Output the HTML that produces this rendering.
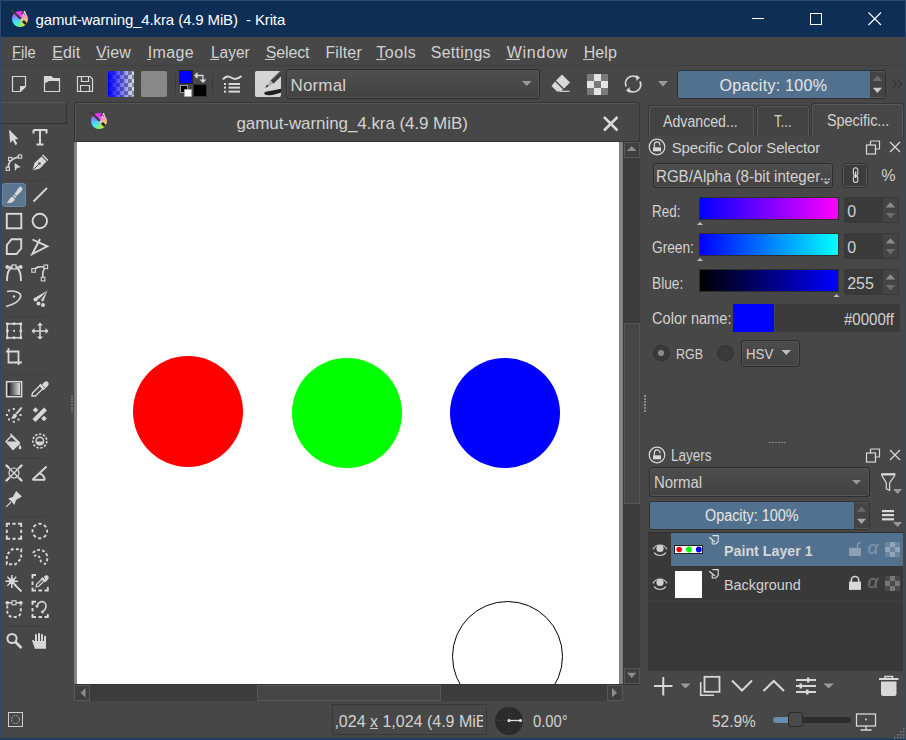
<!DOCTYPE html>
<html><head><meta charset="utf-8">
<style>
*{box-sizing:border-box;margin:0;padding:0}
html,body{width:906px;height:740px;overflow:hidden;background:#474747}
body{position:relative;font-family:"Liberation Sans",sans-serif;color:#d2d2d2}
.a{position:absolute}
.t{position:absolute;white-space:pre;line-height:1}
svg{position:absolute;overflow:visible}
</style></head><body>
<div class="a" style="left:0px;top:0px;width:906px;height:740px;border:1px solid #2c4a6f;"></div>
<div class="a" style="left:1px;top:1px;width:904px;height:36px;background:#0e2e56;"></div>
<div class="a" style="left:12px;top:11px;width:16px;height:16px;border-radius:50%;background:radial-gradient(circle at 45% 60%,rgba(120,170,255,0.55),rgba(120,170,255,0) 55%),conic-gradient(from 0deg,#ff20ff 0deg,#ff70e0 40deg,#ffb0a0 80deg,#ffe030 130deg,#a0ff40 170deg,#30fff0 220deg,#40e0ff 250deg,#8080ff 290deg,#e040ff 330deg,#ff20ff 360deg)"></div>
<svg style="left:12px;top:11px;" width="16" height="16" viewBox="0 0 16 16"><line x1="-1" y1="-1.5" x2="9" y2="8" stroke="#3a3a3a" stroke-width="2.2"/><line x1="9" y1="8" x2="11" y2="10" stroke="#c8c8c8" stroke-width="2"/><line x1="11" y1="10" x2="14" y2="13" stroke="#222" stroke-width="2.6"/><path d="M9 3 L12 -1 L16 4 Z" fill="#333"/><path d="M11.5 5 L12.5 0 L14 4" fill="none" stroke="#eee" stroke-width="1"/></svg>
<div class="t" style="left:35.50px;top:12.00px;font-size:15px;letter-spacing:-0.122px;color:#ffffff;">gamut-warning_4.kra (4.9 MiB)  - Krita</div>
<div class="a" style="left:752px;top:18px;width:12px;height:1px;background:#ffffff;"></div>
<div class="a" style="left:809.5px;top:13px;width:12.5px;height:12px;border:1px solid #ffffff;"></div>
<svg style="left:868px;top:12px;" width="14" height="14" viewBox="0 0 14 14"><path d="M0.5 0.5 L13 13 M13 0.5 L0.5 13" stroke="#fff" stroke-width="1.1"/></svg>
<div class="t" style="left:12.40px;top:45.00px;font-size:16px;letter-spacing:0.000px;color:#d2d2d2;transform:scaleX(0.9231);transform-origin:0 0;">File</div>
<div class="t" style="left:52.30px;top:45.00px;font-size:16px;letter-spacing:0.100px;color:#d2d2d2;">Edit</div>
<div class="t" style="left:96.00px;top:45.00px;font-size:16px;letter-spacing:0.133px;color:#d2d2d2;">View</div>
<div class="t" style="left:147.70px;top:45.00px;font-size:16px;letter-spacing:0.400px;color:#d2d2d2;">Image</div>
<div class="t" style="left:210.60px;top:45.00px;font-size:16px;letter-spacing:0.000px;color:#d2d2d2;transform:scaleX(0.9659);transform-origin:0 0;">Layer</div>
<div class="t" style="left:265.70px;top:45.00px;font-size:16px;letter-spacing:-0.140px;color:#d2d2d2;">Select</div>
<div class="t" style="left:325.40px;top:45.00px;font-size:16px;letter-spacing:0.160px;color:#d2d2d2;">Filter</div>
<div class="t" style="left:376.30px;top:45.00px;font-size:16px;letter-spacing:0.550px;color:#d2d2d2;">Tools</div>
<div class="t" style="left:430.70px;top:45.00px;font-size:16px;letter-spacing:0.300px;color:#d2d2d2;">Settings</div>
<div class="t" style="left:506.70px;top:45.00px;font-size:16px;letter-spacing:0.760px;color:#d2d2d2;">Window</div>
<div class="t" style="left:583.70px;top:45.00px;font-size:16px;letter-spacing:0.100px;color:#d2d2d2;">Help</div>
<div class="a" style="left:12px;top:59px;width:11px;height:1px;background:#c8c8c8;"></div>
<div class="a" style="left:52px;top:59px;width:11px;height:1px;background:#c8c8c8;"></div>
<div class="a" style="left:96px;top:59px;width:11px;height:1px;background:#c8c8c8;"></div>
<div class="a" style="left:147px;top:59px;width:4px;height:1px;background:#c8c8c8;"></div>
<div class="a" style="left:210px;top:59px;width:9px;height:1px;background:#c8c8c8;"></div>
<div class="a" style="left:265px;top:59px;width:10px;height:1px;background:#c8c8c8;"></div>
<div class="a" style="left:354px;top:59px;width:5px;height:1px;background:#c8c8c8;"></div>
<div class="a" style="left:376px;top:59px;width:10px;height:1px;background:#c8c8c8;"></div>
<div class="a" style="left:464px;top:59px;width:7px;height:1px;background:#c8c8c8;"></div>
<div class="a" style="left:506px;top:59px;width:14px;height:1px;background:#c8c8c8;"></div>
<div class="a" style="left:583px;top:59px;width:11px;height:1px;background:#c8c8c8;"></div>
<div class="a" style="left:1px;top:65px;width:904px;height:1px;background:#3f3f3f;"></div>
<div class="a" style="left:108px;top:71px;width:26px;height:26px;border-radius:2px;overflow:hidden;background:linear-gradient(90deg,#0000ff 0%,rgba(0,0,255,0.8) 20%,rgba(0,0,255,0) 100%),repeating-conic-gradient(#8a8a8a 0 25%,#e4e4e4 0 50%) 0 0/8px 8px"></div>
<div class="a" style="left:141px;top:71px;width:26px;height:26px;border-radius:2px;background:#888"></div>
<div class="a" style="left:175px;top:74px;width:1px;height:20px;background:#3a3a3a;"></div>
<div class="a" style="left:179px;top:70px;width:14px;height:14px;background:#0000ff;border:1px solid #222;"></div>
<div class="a" style="left:193px;top:84px;width:14px;height:13px;background:#000000;border:1px solid #333;"></div>
<div class="a" style="left:180px;top:85px;width:8px;height:8px;background:#000;border:1px solid #999;"></div>
<div class="a" style="left:212px;top:74px;width:1px;height:20px;background:#3a3a3a;"></div>
<div class="a" style="left:255px;top:70.7px;width:26.2px;height:26.3px;border-radius:2px;background:#d4d4d4;overflow:hidden"><svg style="left:0;top:0" width="26.2" height="26.3" viewBox="255 70.7 26.2 26.3"><path d="M270.5 80.2 L281.5 69.5 L284.5 72.5 L273.5 83.5 Z" fill="#3c3c3c"/><path d="M272.8 79 L282 70" stroke="#6a6a6a" stroke-width="0.8"/><path d="M270.5 80.2 L273.5 83.5 L265.5 87.5 Z" fill="#b0b0b0"/><path d="M265.3 87.6 L267 84.3 L268.6 86 Z" fill="#333"/><path d="M264.2 92.6 C264 95,268 95.5,272 94.6 C276 93.8,279 92.8,282 91.8 L282 88.2 C277 89.2,272 90.3,267 91.2 C265.5 91.5,264.4 91.8,264.2 92.6 Z" fill="#1e1e1e"/></svg></div>
<div class="a" style="left:286px;top:69px;width:254px;height:30px;border:1px solid #2e2e2e;border-radius:3px;box-shadow:inset 0 0 0 1px #525252;background:linear-gradient(#4f4f4f,#424242)"></div>
<div class="t" style="left:290.60px;top:77.00px;font-size:17px;letter-spacing:0.120px;color:#d2d2d2;">Normal</div>
<div class="a" style="left:677px;top:69.5px;width:209px;height:29px;border:1px solid #2f2f2f;border-radius:3px;background:#444;overflow:hidden"><div style="position:absolute;left:0;top:0;width:191.5px;height:27px;background:#52718f"></div><div style="position:absolute;left:192.5px;top:0;width:15px;height:27px;border:1px solid #575757;border-left:none;border-radius:0 3px 3px 0"></div></div>
<div class="t" style="left:719.50px;top:78.00px;font-size:16px;letter-spacing:0.275px;color:#e6e6e6;">Opacity: 100%</div>
<div class="a" style="left:1px;top:102px;width:66px;height:22px;border-top:1px solid #575757;border-right:1px solid #353535;border-bottom:1px solid #313131"></div>
<div class="a" style="left:7px;top:180px;width:40px;height:1px;background:#3f3f3f;"></div>
<div class="a" style="left:7px;top:316px;width:40px;height:1px;background:#3f3f3f;"></div>
<div class="a" style="left:7px;top:374px;width:40px;height:1px;background:#3f3f3f;"></div>
<div class="a" style="left:7px;top:458px;width:40px;height:1px;background:#3f3f3f;"></div>
<div class="a" style="left:7px;top:516px;width:40px;height:1px;background:#3f3f3f;"></div>
<div class="a" style="left:7px;top:626px;width:40px;height:1px;background:#3f3f3f;"></div>
<div class="a" style="left:2px;top:183px;width:24px;height:24px;border-radius:3px;background:#5a7690;border:1px solid #6a86a0"></div>
<div class="a" style="left:8px;top:383px;width:12.2px;height:12.4px;background:linear-gradient(90deg,#1e1e1e,#e0e0e0)"></div>
<div class="a" style="left:71px;top:395px;width:2px;height:2px;background:#6a6a6a;"></div>
<div class="a" style="left:71px;top:398px;width:2px;height:2px;background:#6a6a6a;"></div>
<div class="a" style="left:71px;top:401px;width:2px;height:2px;background:#6a6a6a;"></div>
<div class="a" style="left:71px;top:404px;width:2px;height:2px;background:#6a6a6a;"></div>
<div class="a" style="left:71px;top:407px;width:2px;height:2px;background:#6a6a6a;"></div>
<div class="a" style="left:71px;top:410px;width:2px;height:2px;background:#6a6a6a;"></div>
<div class="a" style="left:74px;top:102px;width:566px;height:39px;border:1px solid #383838;border-bottom:none;border-radius:4px 4px 0 0;background:#474747;box-shadow:inset 1px 1px 0 #545454"></div>
<div class="a" style="left:74px;top:141px;width:566px;height:1px;background:#353535;"></div>
<div class="a" style="left:91px;top:113px;width:16px;height:16px;border-radius:50%;background:radial-gradient(circle at 45% 60%,rgba(120,170,255,0.55),rgba(120,170,255,0) 55%),conic-gradient(from 0deg,#ff20ff 0deg,#ff70e0 40deg,#ffb0a0 80deg,#ffe030 130deg,#a0ff40 170deg,#30fff0 220deg,#40e0ff 250deg,#8080ff 290deg,#e040ff 330deg,#ff20ff 360deg)"></div>
<svg style="left:91px;top:113px;" width="16" height="16" viewBox="0 0 16 16"><line x1="-1" y1="-1.5" x2="9" y2="8" stroke="#3a3a3a" stroke-width="2.2"/><line x1="9" y1="8" x2="11" y2="10" stroke="#c8c8c8" stroke-width="2"/><line x1="11" y1="10" x2="14" y2="13" stroke="#222" stroke-width="2.6"/><path d="M9 3 L12 -1 L16 4 Z" fill="#333"/><path d="M11.5 5 L12.5 0 L14 4" fill="none" stroke="#eee" stroke-width="1"/></svg>
<div class="t" style="left:236.40px;top:115.00px;font-size:17px;letter-spacing:-0.068px;color:#d2d2d2;">gamut-warning_4.kra (4.9 MiB)</div>
<div class="a" style="left:74px;top:142px;width:4px;height:542px;background:#7c7c7c;"></div>
<div class="a" style="left:75px;top:142px;width:2px;height:542px;background:#878787;"></div>
<div class="a" style="left:77px;top:142px;width:542px;height:542px;background:#ffffff;"></div>
<div class="a" style="left:619px;top:142px;width:4px;height:542px;background:#7c7c7c;"></div>
<div class="a" style="left:620px;top:142px;width:2px;height:542px;background:#878787;"></div>
<div class="a" style="left:74px;top:684px;width:566px;height:1px;background:#333333;"></div>
<div class="a" style="left:133.2px;top:356px;width:110px;height:110.8px;border-radius:50%;background:#ff0000"></div>
<div class="a" style="left:291.5px;top:358.2px;width:110px;height:110.3px;border-radius:50%;background:#00ff00"></div>
<div class="a" style="left:450px;top:357.7px;width:110.2px;height:110px;border-radius:50%;background:#0000ff"></div>
<div class="a" style="left:77px;top:142px;width:542px;height:542px;overflow:hidden"><div style="position:absolute;left:374.5px;top:458.8px;width:111.4px;height:111.4px;border-radius:50%;border:1.2px solid #000"></div></div>
<div class="a" style="left:623px;top:142px;width:17px;height:542px;background:#3c3c3c;"></div>
<div class="a" style="left:624px;top:142px;width:16px;height:16px;border:1px solid #575757;background:#3f3f3f;"></div>
<div class="a" style="left:624px;top:323px;width:16px;height:181px;border:1px solid #575757;background:#464646;"></div>
<div class="a" style="left:624px;top:668px;width:16px;height:16px;border:1px solid #575757;background:#3f3f3f;"></div>
<div class="a" style="left:74px;top:685px;width:549px;height:16px;background:#3c3c3c;"></div>
<div class="a" style="left:74px;top:685px;width:16px;height:16px;border:1px solid #575757;background:#3f3f3f;"></div>
<div class="a" style="left:257px;top:685px;width:184px;height:16px;border:1px solid #575757;background:#464646;"></div>
<div class="a" style="left:607px;top:685px;width:16px;height:16px;border:1px solid #575757;background:#3f3f3f;"></div>
<div class="a" style="left:647px;top:135px;width:257px;height:1px;background:#3a3a3a;"></div>
<div class="a" style="left:648px;top:104.5px;width:107px;height:31px;border:1px solid #383838;border-bottom:none;border-radius:3px 3px 0 0;box-shadow:inset 1px 1px 0 #575757,inset -1px 0 0 #575757;background:#434343"></div>
<div class="a" style="left:756px;top:104.5px;width:54px;height:31px;border:1px solid #383838;border-bottom:none;border-radius:3px 3px 0 0;box-shadow:inset 1px 1px 0 #575757,inset -1px 0 0 #575757;background:#434343"></div>
<div class="a" style="left:811px;top:103px;width:93px;height:34px;border:1px solid #383838;border-bottom:none;border-radius:3px 3px 0 0;box-shadow:inset 1px 1px 0 #575757,inset -1px 0 0 #575757;background:#474747"></div>
<div class="t" style="left:662.90px;top:114.00px;font-size:16px;letter-spacing:0.000px;color:#d2d2d2;transform:scaleX(0.8847);transform-origin:0 0;">Advanced...</div>
<div class="t" style="left:774.00px;top:114.00px;font-size:16px;letter-spacing:0.000px;color:#d2d2d2;transform:scaleX(0.8238);transform-origin:0 0;">T...</div>
<div class="t" style="left:826.60px;top:113.00px;font-size:16px;letter-spacing:0.000px;color:#d2d2d2;transform:scaleX(0.8986);transform-origin:0 0;">Specific...</div>
<div class="t" style="left:671.70px;top:140.00px;font-size:15px;letter-spacing:-0.141px;color:#d2d2d2;">Specific Color Selector</div>
<div class="a" style="left:653px;top:163px;width:180px;height:25px;border:1px solid #2e2e2e;border-radius:3px;box-shadow:inset 0 0 0 1px #525252;background:linear-gradient(#4e4e4e,#434343)"></div>
<div class="t" style="left:656.00px;top:169.00px;font-size:16px;letter-spacing:0.000px;color:#d2d2d2;transform:scaleX(0.9417);transform-origin:0 0;">RGB/Alpha (8-bit integer</div>
<div class="a" style="left:842px;top:162.5px;width:26px;height:25.5px;border:1px solid #333;border-radius:4px;box-shadow:inset 0 0 0 1px #575757;background:#3c3c3c"></div>
<div class="t" style="left:881.30px;top:168.00px;font-size:16px;letter-spacing:0.000px;color:#d2d2d2;">%</div>
<div class="t" style="left:652.30px;top:204.00px;font-size:16px;letter-spacing:0.000px;color:#d2d2d2;transform:scaleX(0.8441);transform-origin:0 0;">Red:</div>
<div class="a" style="left:699px;top:196.5px;width:140px;height:23px;border:1px solid #2e2e2e;background:linear-gradient(90deg,#0000ff,#ff00ff)"></div>
<div class="a" style="left:844px;top:197.0px;width:55px;height:26px;border:1px solid #393939;border-radius:3px;background:#3a3a3a"></div>
<div class="a" style="left:883px;top:198.0px;width:15px;height:24px;background:#444444;"></div>
<div class="t" style="left:847.20px;top:204.00px;font-size:16px;letter-spacing:0.000px;color:#d2d2d2;">0</div>
<div class="t" style="left:652.30px;top:240.00px;font-size:16px;letter-spacing:0.000px;color:#d2d2d2;transform:scaleX(0.8571);transform-origin:0 0;">Green:</div>
<div class="a" style="left:699px;top:232.5px;width:140px;height:23px;border:1px solid #2e2e2e;background:linear-gradient(90deg,#0000ff,#00ffff)"></div>
<div class="a" style="left:844px;top:233.0px;width:55px;height:26px;border:1px solid #393939;border-radius:3px;background:#3a3a3a"></div>
<div class="a" style="left:883px;top:234.0px;width:15px;height:24px;background:#444444;"></div>
<div class="t" style="left:847.20px;top:240.00px;font-size:16px;letter-spacing:0.000px;color:#d2d2d2;">0</div>
<div class="t" style="left:652.30px;top:276.00px;font-size:16px;letter-spacing:0.000px;color:#d2d2d2;transform:scaleX(0.8568);transform-origin:0 0;">Blue:</div>
<div class="a" style="left:699px;top:268.5px;width:140px;height:23px;border:1px solid #2e2e2e;background:linear-gradient(90deg,#000000,#0000ff)"></div>
<div class="a" style="left:844px;top:269.0px;width:55px;height:26px;border:1px solid #393939;border-radius:3px;background:#3a3a3a"></div>
<div class="a" style="left:883px;top:270.0px;width:15px;height:24px;background:#444444;"></div>
<div class="t" style="left:847.20px;top:276.00px;font-size:16px;letter-spacing:0.000px;color:#d2d2d2;">255</div>
<div class="t" style="left:652.30px;top:311.00px;font-size:16px;letter-spacing:0.000px;color:#d2d2d2;transform:scaleX(0.9115);transform-origin:0 0;">Color name:</div>
<div class="a" style="left:733px;top:304px;width:41px;height:28px;background:#0000ff;"></div>
<div class="a" style="left:775px;top:304px;width:125px;height:28px;border-radius:3px;background:#3a3a3a"></div>
<div class="t" style="left:844.00px;top:312.00px;font-size:16px;letter-spacing:0.000px;color:#d2d2d2;transform:scaleX(0.9407);transform-origin:0 0;">#0000ff</div>
<div class="a" style="left:653px;top:344.6px;width:16.5px;height:16.5px;border-radius:50%;background:#3a3a3a;border:1px solid #333"></div>
<div class="a" style="left:658.2px;top:349.8px;width:6px;height:6px;border-radius:50%;background:#8c8c8c"></div>
<div class="t" style="left:676.30px;top:346.00px;font-size:15px;letter-spacing:0.000px;color:#d2d2d2;transform:scaleX(0.8303);transform-origin:0 0;">RGB</div>
<div class="a" style="left:717px;top:344.6px;width:16.5px;height:16.5px;border-radius:50%;background:#3a3a3a;border:1px solid #333"></div>
<div class="a" style="left:740.5px;top:339.5px;width:59.5px;height:27px;border:1px solid #2e2e2e;border-radius:3px;box-shadow:inset 0 0 0 1px #525252;background:linear-gradient(#4c4c4c,#434343)"></div>
<div class="t" style="left:745.60px;top:346.00px;font-size:15px;letter-spacing:0.000px;color:#d2d2d2;transform:scaleX(0.8839);transform-origin:0 0;">HSV</div>
<div class="a" style="left:644px;top:395px;width:1.5px;height:1.5px;background:#8a8a8a;"></div>
<div class="a" style="left:644px;top:398px;width:1.5px;height:1.5px;background:#8a8a8a;"></div>
<div class="a" style="left:644px;top:401px;width:1.5px;height:1.5px;background:#8a8a8a;"></div>
<div class="a" style="left:644px;top:404px;width:1.5px;height:1.5px;background:#8a8a8a;"></div>
<div class="a" style="left:644px;top:407px;width:1.5px;height:1.5px;background:#8a8a8a;"></div>
<div class="a" style="left:644px;top:410px;width:1.5px;height:1.5px;background:#8a8a8a;"></div>
<div class="a" style="left:769px;top:441.5px;width:1.5px;height:1.5px;background:#8a8a8a;"></div>
<div class="a" style="left:772px;top:441.5px;width:1.5px;height:1.5px;background:#8a8a8a;"></div>
<div class="a" style="left:775px;top:441.5px;width:1.5px;height:1.5px;background:#8a8a8a;"></div>
<div class="a" style="left:778px;top:441.5px;width:1.5px;height:1.5px;background:#8a8a8a;"></div>
<div class="a" style="left:781px;top:441.5px;width:1.5px;height:1.5px;background:#8a8a8a;"></div>
<div class="a" style="left:784px;top:441.5px;width:1.5px;height:1.5px;background:#8a8a8a;"></div>
<div class="t" style="left:671.40px;top:448.00px;font-size:16px;letter-spacing:0.000px;color:#d2d2d2;transform:scaleX(0.8438);transform-origin:0 0;">Layers</div>
<div class="a" style="left:648.5px;top:467px;width:221.5px;height:30px;border:1px solid #2e2e2e;border-radius:3px;box-shadow:inset 0 0 0 1px #525252;background:linear-gradient(#4d4d4d,#424242)"></div>
<div class="t" style="left:653.80px;top:475.00px;font-size:16px;letter-spacing:0.000px;color:#d2d2d2;transform:scaleX(0.9346);transform-origin:0 0;">Normal</div>
<div class="a" style="left:648.5px;top:500.5px;width:221.5px;height:29px;border:1px solid #333;border-radius:3px;background:#444;overflow:hidden"><div style="position:absolute;left:0;top:0;width:204px;height:27px;background:#52718f"></div><div style="position:absolute;left:205px;top:0;width:15.5px;height:27px;border:1px solid #575757;border-left:none;border-radius:0 3px 3px 0"></div></div>
<div class="t" style="left:704.60px;top:508.00px;font-size:16px;letter-spacing:0.000px;color:#e6e6e6;transform:scaleX(0.8981);transform-origin:0 0;">Opacity: 100%</div>
<div class="a" style="left:648px;top:531.5px;width:255px;height:1px;background:#2f2f2f;"></div>
<div class="a" style="left:648px;top:532.5px;width:255px;height:138.5px;background:#393939;"></div>
<div class="a" style="left:670.8px;top:533px;width:232.2px;height:33px;background:#52718f;"></div>
<div class="a" style="left:648px;top:600px;width:255px;height:1px;background:#3e3e3e;"></div>
<div class="a" style="left:674px;top:545px;width:29px;height:9px;background:#ffffff;border:1px solid #222;"></div>
<div class="a" style="left:675px;top:571px;width:27px;height:27px;background:#ffffff;"></div>
<div class="t" style="left:724.30px;top:543.00px;font-size:15px;letter-spacing:0.000px;color:#d6d6d6;font-weight:bold;transform:scaleX(0.9495);transform-origin:0 0;">Paint Layer 1</div>
<div class="t" style="left:724.30px;top:577.00px;font-size:15px;letter-spacing:0.000px;color:#d2d2d2;transform:scaleX(0.9588);transform-origin:0 0;">Background</div>
<div class="t" style="left:867.50px;top:538.00px;font-size:19px;letter-spacing:0.000px;color:#7b94aa;font-style:italic;-webkit-text-stroke:0.4px #7b94aa;">α</div>
<div class="t" style="left:867.50px;top:572.00px;font-size:19px;letter-spacing:0.000px;color:#6a6a6a;font-style:italic;-webkit-text-stroke:0.4px #6a6a6a;">α</div>
<div class="a" style="left:8px;top:712px;width:15px;height:15px;border:1px solid #d0d0d0;"></div>
<div class="a" style="left:332px;top:704px;width:155px;height:31px;border:1px solid #393939;overflow:hidden"></div>
<div class="t" style="left:334.40px;top:714.00px;font-size:16px;letter-spacing:0.000px;color:#d2d2d2;clip-path:inset(0 -2px 0 0);">,024 x 1,024 (4.9 MiB)</div>
<div class="a" style="left:483px;top:705px;width:22px;height:29px;background:#474747;"></div>
<div class="a" style="left:486px;top:704px;width:1px;height:31px;background:#393939;"></div>
<div class="a" style="left:370px;top:727.5px;width:8px;height:1px;background:#c8c8c8;"></div>
<div class="a" style="left:495px;top:706.5px;width:28px;height:28px;border-radius:50%;background:#2b2b2b"></div>
<div class="t" style="left:532.60px;top:714.00px;font-size:16px;letter-spacing:0.000px;color:#d2d2d2;transform:scaleX(0.9237);transform-origin:0 0;">0.00°</div>
<div class="t" style="left:711.80px;top:714.00px;font-size:16px;letter-spacing:0.000px;color:#d2d2d2;transform:scaleX(0.9644);transform-origin:0 0;">52.9%</div>
<div class="a" style="left:773px;top:717px;width:77.5px;height:6px;border-radius:3px;background:#2e2e2e"></div>
<div class="a" style="left:773px;top:717px;width:16px;height:6px;border-radius:3px 0 0 3px;background:#6a8cab"></div>
<div class="a" style="left:787.5px;top:711.5px;width:15px;height:15px;border-radius:3px;background:#4a4a4a;border:1px solid #2a2a2a"></div>
<div class="a" style="left:0px;top:738px;width:906px;height:2px;background:#1f3e64;"></div>
<svg style="left:0;top:0" width="906" height="740" viewBox="0 0 906 740"><path d="M12.5 76.5 H25.5 V86.5 L20.5 91.5 H12.5 Z" fill="none" stroke="#d8d8d8" stroke-width="1.2"/><path d="M25.5 86.5 L20.5 91.5 V86.5 Z" fill="#d8d8d8" stroke="#d8d8d8" stroke-width="1"/><path d="M44.5 76.5 H51 L53 78.5 H59.5 V91.5 H44.5 Z" fill="none" stroke="#d8d8d8" stroke-width="1.2"/><path d="M44.5 76.5 H51 L53 78.5 H59.5 V81 H49 L44.5 83.5 Z" fill="#d8d8d8"/><path d="M77.5 76.5 H90 L92.5 79 V91.5 H77.5 Z" fill="none" stroke="#d8d8d8" stroke-width="1.2"/><path d="M81.5 76.5 V81.5 H88.5 V76.5" fill="none" stroke="#d8d8d8" stroke-width="1.2"/><path d="M80.5 91.5 V85.5 H89.5 V91.5" fill="none" stroke="#d8d8d8" stroke-width="1.2"/><path d="M184.5 89.5 H191.5 V96.5 H184.5 Z" fill="#fff" stroke="#aaa" stroke-width="0.8"/><path d="M184.8 94 H192 V90" fill="none" stroke="#fff" stroke-width="0"/><path d="M196 75.5 H203 V80" fill="none" stroke="#d8d8d8" stroke-width="1.3"/><path d="M194 75.5 L197.5 72 V79 Z" fill="#d8d8d8"/><path d="M203 83 L199.5 79.5 H206.5 Z" fill="#d8d8d8"/><path d="M223 79.5 C226 75, 229 76, 232 78 C235 80, 238 79, 241.5 76" fill="none" stroke="#d8d8d8" stroke-width="2"/><rect x="224" y="83" width="2" height="2" fill="#d8d8d8"/><rect x="228.5" y="83" width="11.5" height="2" fill="#d8d8d8"/><rect x="224" y="86.6" width="2" height="2" fill="#d8d8d8"/><rect x="228.5" y="86.6" width="11.5" height="2" fill="#d8d8d8"/><rect x="224" y="90.6" width="2" height="2" fill="#d8d8d8"/><rect x="228.5" y="90.6" width="11.5" height="2" fill="#d8d8d8"/><path d="M522 81 H531.5 L526.75 86 Z" fill="#9a9a9a"/><path d="M562 74.5 L570 82.5 L564 88.5 L556 80.5 Z" fill="#d8d8d8"/><path d="M555 81.5 L563 89.5 L560.5 91.5 H557 L551.5 86 Z" fill="#d8d8d8"/><path d="M560 91.3 H569.5" stroke="#d8d8d8" stroke-width="1.2"/><rect x="587" y="74" width="7" height="7" fill="#7a7a7a"/><rect x="587" y="81" width="7" height="7" fill="#e4e4e4"/><rect x="587" y="88" width="7" height="7" fill="#7a7a7a"/><rect x="594" y="74" width="7" height="7" fill="#e4e4e4"/><rect x="594" y="81" width="7" height="7" fill="#7a7a7a"/><rect x="594" y="88" width="7" height="7" fill="#e4e4e4"/><rect x="601" y="74" width="7" height="7" fill="#7a7a7a"/><rect x="601" y="81" width="7" height="7" fill="#e4e4e4"/><rect x="601" y="88" width="7" height="7" fill="#7a7a7a"/><path d="M626.2 86.5 A7.3 7.3 0 0 1 637.5 77.8" fill="none" stroke="#d8d8d8" stroke-width="1.8"/><path d="M640 81.5 A7.3 7.3 0 0 1 628.7 90.2" fill="none" stroke="#d8d8d8" stroke-width="1.8"/><path d="M636 75 L640 77.5 L636.5 81 Z" fill="#d8d8d8"/><path d="M630 93 L626 90.5 L629.5 87 Z" fill="#d8d8d8"/><path d="M658 81 H668 L663 86.5 Z" fill="#9a9a9a"/><path d="M872.8 81 L877.4 75.6 L882 81 Z" fill="#6e6e6e"/><path d="M872.8 87.8 H882 L877.4 93.1 Z" fill="#cacaca"/><path d="M893 80.2 L896.5 84 L893 87.8 M898 80.2 L901.5 84 L898 87.8" fill="none" stroke="#333" stroke-width="1.2"/><path d="M9 129.5 L18.5 139 L15 139.3 L17.3 144 L15.3 145 L13 140.3 L10.2 143 Z" fill="#d8d8d8"/><path d="M33.5 130 H46.5 V133.5 M33.5 130 V133.5 M40 130 V144.5 M36.5 144.5 H43.5" fill="none" stroke="#d8d8d8" stroke-width="2"/><path d="M8 168.5 C8.5 162, 10 159, 20 156.5" fill="none" stroke="#d8d8d8" stroke-width="1.6"/><rect x="6.199999999999999" y="167.20000000000002" width="3.2" height="3.2" fill="#474747" stroke="#d8d8d8" stroke-width="1.1"/><rect x="8.6" y="157.4" width="3.2" height="3.2" fill="#474747" stroke="#d8d8d8" stroke-width="1.1"/><rect x="18.4" y="155.0" width="3.2" height="3.2" fill="#474747" stroke="#d8d8d8" stroke-width="1.1"/><path d="M14.5 163 L21 167.3 L17.3 167.8 L15 171 Z" fill="#d8d8d8"/><path d="M32.5 170.5 L34.5 163 L41.5 156.5 L46.5 161.5 L40 168.5 Z" fill="#d8d8d8"/><path d="M42.5 155 L48 160.5" stroke="#d8d8d8" stroke-width="1.6"/><path d="M32.5 170.5 L38.5 164.5" stroke="#474747" stroke-width="1"/><circle cx="39.5" cy="163.5" r="1.2" fill="#474747"/><path d="M22 188 C21.5 186, 19.5 186.5, 18.5 188 L14.5 194 L16.5 196 L21.5 191 C22.5 190,22.5 189,22 188 Z" fill="#d8d8d8"/><path d="M13.5 195 L16 197.5" stroke="#d8d8d8" stroke-width="1.6"/><path d="M12.5 196.5 L15 199 C14 202.5, 10 203.5, 6.5 203 C9 201.5, 9.5 197.5, 12.5 196.5 Z" fill="#d8d8d8"/><path d="M33.5 201.5 L47 188" stroke="#d8d8d8" stroke-width="1.8"/><rect x="6.8" y="213.8" width="14.5" height="14.5" fill="none" stroke="#d8d8d8" stroke-width="1.9"/><circle cx="39.8" cy="221" r="7.2" fill="none" stroke="#d8d8d8" stroke-width="1.9"/><path d="M6.8 254 V245 L11.5 239.3 H21.2 V248.5 L16.5 254 Z" fill="none" stroke="#d8d8d8" stroke-width="1.9" stroke-linejoin="miter"/><path d="M32.5 239.5 L47.3 246.3 L32.3 254 L40 239" fill="none" stroke="#d8d8d8" stroke-width="1.9"/><path d="M7 281 C7 271, 9.5 267.3, 14 267.3 C18.5 267.3, 21 271, 21 281" fill="none" stroke="#d8d8d8" stroke-width="1.9"/><path d="M7 267 H21" stroke="#d8d8d8" stroke-width="1.5"/><circle cx="7.3" cy="267" r="1.9" fill="#d8d8d8"/><circle cx="20.7" cy="267" r="1.9" fill="#d8d8d8"/><rect x="12" y="265" width="4" height="4" fill="#474747" stroke="#d8d8d8" stroke-width="1.2"/><path d="M33.5 270.5 C35 267.5, 40 265.5, 45 267.5 C43 270, 42.5 274, 43 278" fill="none" stroke="#d8d8d8" stroke-width="1.6"/><rect x="31.8" y="268.6" width="3.6" height="3.6" fill="#474747" stroke="#d8d8d8" stroke-width="1.1"/><rect x="44" y="265" width="3.6" height="3.6" fill="#474747" stroke="#d8d8d8" stroke-width="1.1"/><rect x="41.3" y="277.3" width="3.6" height="3.6" fill="#474747" stroke="#d8d8d8" stroke-width="1.1"/><path d="M7 291.5 C14 290, 22 292.5, 20.5 297 C19 301.5, 12 305, 6 306.5" fill="none" stroke="#d8d8d8" stroke-width="1.7"/><circle cx="14" cy="296.5" r="1.2" fill="#d8d8d8"/><path d="M47.5 290.5 L37 296.5 L39.5 298.5 Z M47.5 290.5 L41 300 L43 302 Z M47.5 290.5 L35 298 L36 301 Z" fill="#d8d8d8"/><circle cx="35.5" cy="299.5" r="2" fill="#d8d8d8"/><circle cx="38.5" cy="303.5" r="2" fill="#d8d8d8"/><circle cx="43" cy="305" r="2" fill="#d8d8d8"/><rect x="7.3" y="323.8" width="13.5" height="14" fill="none" stroke="#d8d8d8" stroke-width="1.5"/><circle cx="14" cy="330.8" r="1.1" fill="#d8d8d8"/><rect x="6.0" y="322.5" width="2.6" height="2.6" fill="#d8d8d8"/><rect x="12.7" y="322.5" width="2.6" height="2.6" fill="#d8d8d8"/><rect x="19.5" y="322.5" width="2.6" height="2.6" fill="#d8d8d8"/><rect x="6.0" y="329.5" width="2.6" height="2.6" fill="#d8d8d8"/><rect x="19.5" y="329.5" width="2.6" height="2.6" fill="#d8d8d8"/><rect x="6.0" y="336.5" width="2.6" height="2.6" fill="#d8d8d8"/><rect x="12.7" y="336.5" width="2.6" height="2.6" fill="#d8d8d8"/><rect x="19.5" y="336.5" width="2.6" height="2.6" fill="#d8d8d8"/><path d="M32 331 H48 M40 323 V339" stroke="#d8d8d8" stroke-width="1.6"/><path d="M31.5 331 L34.5 328 V334 Z M48.5 331 L45.5 328 V334 Z M40 322.5 L37 325.5 H43 Z M40 339.5 L37 336.5 H43 Z" fill="#d8d8d8"/><path d="M8.5 348 V362.5 H22 M6 351.5 H18.5 V365" fill="none" stroke="#d8d8d8" stroke-width="1.8"/><rect x="6.6" y="381.7" width="15" height="15" fill="none" stroke="#d8d8d8" stroke-width="1.5"/><path d="M31.8 396 L32.5 393 L40.5 385 L43.5 388 L35.5 396 Z" fill="none" stroke="#d8d8d8" stroke-width="1.3" stroke-linejoin="round"/><path d="M38.8 385.5 L40.5 383.8 L45.2 388.5 L43.5 390.2 Z" fill="#d8d8d8"/><path d="M42 384.5 L44.2 382.3 C45.5 381,47.3 381,48 382 C49 383,49 384.8,47.7 386 L45.5 388.2 Z" fill="#d8d8d8"/><path d="M20.8 407.3 C21.8 406.6,22.5 408,21.8 409 L17 414.5 L15.5 413.2 Z" fill="#d8d8d8"/><path d="M15 413.5 L17 415.3 C16.5 418.5,13.5 419.5,11 418.5 C13 417.5,12.5 414,15 413.5 Z" fill="#d8d8d8"/><rect x="12.8" y="408" width="2" height="2" fill="#d8d8d8"/><rect x="6" y="414" width="2" height="2" fill="#d8d8d8"/><rect x="12.8" y="420.8" width="2" height="2" fill="#d8d8d8"/><rect x="19.5" y="414" width="2" height="2" fill="#d8d8d8"/><rect x="8" y="409.5" width="2" height="2" fill="#d8d8d8"/><rect x="17.5" y="418.5" width="2" height="2" fill="#d8d8d8"/><rect x="8" y="418.5" width="2" height="2" fill="#d8d8d8"/><path d="M34 420.5 L45.5 409" stroke="#d8d8d8" stroke-width="4"/><rect x="33.5" y="408" width="4" height="4" transform="rotate(45 35.5 410)" fill="#d8d8d8"/><rect x="42" y="416.5" width="4" height="4" transform="rotate(45 44 418.5)" fill="#d8d8d8"/><path d="M10.3 433.8 L19.8 443.3" stroke="#d8d8d8" stroke-width="1.4"/><path d="M6 441.5 L11.3 436 L19.3 443.8 L13 449.5 Z" fill="none" stroke="#d8d8d8" stroke-width="1.3" stroke-linejoin="round"/><path d="M6.5 441.5 H17 L19.3 443.8 L13 449.5 Z" fill="#d8d8d8"/><path d="M20 444.5 C20.8 446,21.3 447,21.3 447.8 C21.3 448.8,20.6 449.3,20 449.3 C19.4 449.3,18.7 448.8,18.7 447.8 C18.7 447,19.2 446,20 444.5 Z" fill="#d8d8d8"/><circle cx="39.8" cy="441" r="7" fill="none" stroke="#d8d8d8" stroke-width="1.6" stroke-dasharray="2.4 1.6"/><circle cx="39.8" cy="441" r="3.8" fill="none" stroke="#d8d8d8" stroke-width="1.4"/><path d="M36 441.5 H43.6 A3.8 3.8 0 0 1 36 441.5 Z" fill="#d8d8d8"/><circle cx="14" cy="473" r="5" fill="none" stroke="#d8d8d8" stroke-width="1.2"/><path d="M7 466 L21 480 M21 466 L7 480" stroke="#d8d8d8" stroke-width="1.4"/><path d="M6.5 465.5 L8.5 467.5 M21.5 465.5 L19.5 467.5 M6.5 480.5 L8.5 478.5 M21.5 480.5 L19.5 478.5" stroke="#d8d8d8" stroke-width="2.4" stroke-linecap="round"/><path d="M32.5 479.8 L46.5 466.5" stroke="#d8d8d8" stroke-width="1.9"/><path d="M32.5 479.8 H45" stroke="#d8d8d8" stroke-width="1.9"/><path d="M39.5 473.3 C42.5 474.5,44.5 477,44.8 479.8" fill="none" stroke="#d8d8d8" stroke-width="1.8"/><path d="M16.2 491 L21.9 496.6 L16 500 L14.4 505 L11.5 501.5 L8.2 498.4 L12.8 497 Z" fill="#d8d8d8"/><path d="M11 502 L6.2 506.8" stroke="#d8d8d8" stroke-width="1.1"/><path d="M6.8 527.0 V523.8 H10.0 M18.0 523.8 H21.2 V527.0 M21.2 535.5999999999999 V538.8 H18.0 M10.0 538.8 H6.8 V535.5999999999999" fill="none" stroke="#d8d8d8" stroke-width="1.9"/><path d="M12.4 523.8 H15.6 M12.4 538.8 H15.6 M6.8 529.6999999999999 V532.9 M21.2 529.6999999999999 V532.9" stroke="#d8d8d8" stroke-width="1.9"/><circle cx="39.8" cy="531" r="7.3" fill="none" stroke="#d8d8d8" stroke-width="1.9" stroke-dasharray="3.2 2.53" stroke-dashoffset="1.6"/><path d="M6.8 564.2 V555 L12 549.3 H21.2 V558.5 L15.5 564.2 Z" fill="none" stroke="#d8d8d8" stroke-width="1.9" stroke-dasharray="3 2.2"/><path d="M33 553 C36 548.5, 45 548.5, 47 555.5 C48 560, 46.5 563, 44 564.5" fill="none" stroke="#d8d8d8" stroke-width="1.9" stroke-dasharray="3 2"/><path d="M34 556 C37 554.5, 40.5 555.5, 41 563" fill="none" stroke="#d8d8d8" stroke-width="1.9" stroke-dasharray="2.5 2"/><path d="M14 584 L21.5 591.5" stroke="#d8d8d8" stroke-width="1.8"/><path d="M11.8 575 V588 M5.5 581.3 H18 M7.3 576.8 L16.3 585.8 M16.3 576.8 L7.3 585.8" stroke="#d8d8d8" stroke-width="1.5"/><circle cx="11.8" cy="581.3" r="3" fill="#d8d8d8"/><path d="M32.5 578.5 V575 H36 M32.5 581.5 V585 M32.5 587.5 V590.5 H36 M38.5 590.5 H42 M44.5 590.5 H47.8 V587" fill="none" stroke="#d8d8d8" stroke-width="1.9"/><path d="M36 587 L36.5 584.5 L42 579 L44 581 L38.5 586.5 Z" fill="none" stroke="#d8d8d8" stroke-width="1.2" stroke-linejoin="round"/><path d="M41 578.5 L42.5 577 L46.5 581 L45 582.5 Z" fill="#d8d8d8"/><path d="M44 576.5 C45.5 575,47.5 575,48.2 576 C49 577,48.8 578.8,47.5 580 L46 581.5 Z" fill="#d8d8d8"/><path d="M7.3 605.5 V611 C7.3 615.5, 9.5 617, 14 617 C18.5 617, 20.8 615.5, 20.8 611 V605.5" fill="none" stroke="#d8d8d8" stroke-width="1.9" stroke-dasharray="3 2.2"/><path d="M8 602.8 H20" stroke="#d8d8d8" stroke-width="1.4"/><circle cx="7.3" cy="602.8" r="1.9" fill="#d8d8d8"/><circle cx="20.8" cy="602.8" r="1.9" fill="#d8d8d8"/><rect x="12" y="600.8" width="4" height="4" fill="#474747" stroke="#d8d8d8" stroke-width="1.1"/><path d="M32.5 605 V601.8 H36 M32.5 608 V611.5 M32.5 614 V617 H36 M38.5 617 H42 M44.5 617 H47.8 V614" fill="none" stroke="#d8d8d8" stroke-width="1.9"/><path d="M37 606 C38 602, 42 600.5, 44.5 602.5 C47 604.5, 46.5 608.5, 43 611.5" fill="none" stroke="#d8d8d8" stroke-width="1.6"/><circle cx="37" cy="606.3" r="1.4" fill="#d8d8d8"/><circle cx="42.5" cy="612" r="1.4" fill="#d8d8d8"/><circle cx="12" cy="638.5" r="4.6" fill="none" stroke="#d8d8d8" stroke-width="2"/><path d="M15.5 642 L21.5 648" stroke="#d8d8d8" stroke-width="2.6"/><rect x="35" y="634" width="1.9" height="9" rx="0.9" fill="#d8d8d8"/><rect x="38" y="632.9" width="2" height="10" rx="0.9" fill="#d8d8d8"/><rect x="41" y="634" width="1.9" height="9" rx="0.9" fill="#d8d8d8"/><rect x="44" y="635.8" width="2" height="8" rx="0.9" fill="#d8d8d8"/><path d="M34.5 641 H46 V648.8 H35 L32 640.5 C32.5 639.8,33.5 639.8,34.2 641 Z" fill="#d8d8d8"/><path d="M604 117 L617.5 130.5 M617.5 117 L604 130.5" stroke="#d8d8d8" stroke-width="2.6"/><path d="M627 151 H636.5 L631.75 146 Z" fill="#8c8c8c"/><path d="M627 672.7 H636.5 L631.75 678 Z" fill="#8c8c8c"/><path d="M85.5 688 V697.5 L80.5 692.75 Z" fill="#8c8c8c"/><path d="M612 688 V697.5 L617 692.75 Z" fill="#8c8c8c"/><circle cx="657" cy="147" r="7.8" fill="none" stroke="#d8d8d8" stroke-width="1.2"/><rect x="653" y="147.3" width="8" height="4" fill="#d8d8d8"/><path d="M654.4 147.5 V144.8 A2.75 2.75 0 0 1 659.9 144.5 V145.4" fill="none" stroke="#d8d8d8" stroke-width="1.2"/><path d="M870.5 141.0 H879.5 V149.0 H874.5 M870.5 141.0 V145.0" fill="none" stroke="#d8d8d8" stroke-width="1.2"/><rect x="866.5" y="145.0" width="9" height="9" fill="none" stroke="#d8d8d8" stroke-width="1.2"/><path d="M890 142.0 L900 152.0 M900 142.0 L890 152.0" stroke="#d8d8d8" stroke-width="1.3"/><rect x="821" y="178.5" width="2" height="1.5" fill="#bbb"/><rect x="824.5" y="178.5" width="2" height="1.5" fill="#bbb"/><rect x="828" y="178.5" width="2" height="1.5" fill="#bbb"/><path d="M823 181.5 H830 L826.5 184.5 Z" fill="#bbb"/><rect x="853.4" y="167.7" width="4.4" height="8" rx="2.1" fill="none" stroke="#d8d8d8" stroke-width="1.1"/><rect x="853.4" y="176" width="4.4" height="6.4" rx="2.1" fill="none" stroke="#d8d8d8" stroke-width="1.1"/><path d="M855.6 171.5 V178" stroke="#d8d8d8" stroke-width="1.3"/><path d="M697 225.0 H703 L700 222.0 Z" fill="#bdbdbd"/><path d="M885.6 207.5 L890.45 202.3 L895.3 207.5 Z" fill="#8a8a8a"/><path d="M885.6 213.0 H895.3 L890.45 218.3 Z" fill="#6c6c6c"/><path d="M697 261.0 H703 L700 258.0 Z" fill="#bdbdbd"/><path d="M885.6 243.5 L890.45 238.3 L895.3 243.5 Z" fill="#8a8a8a"/><path d="M885.6 249.0 H895.3 L890.45 254.3 Z" fill="#6c6c6c"/><path d="M833.5 297.0 H839.5 L836.5 294.0 Z" fill="#bdbdbd"/><path d="M885.6 279.5 L890.45 274.3 L895.3 279.5 Z" fill="#8a8a8a"/><path d="M885.6 285.0 H895.3 L890.45 290.3 Z" fill="#6c6c6c"/><path d="M781.5 350 H791 L786.25 355 Z" fill="#bdbdbd"/><circle cx="657" cy="455" r="7.8" fill="none" stroke="#d8d8d8" stroke-width="1.2"/><rect x="653" y="455.3" width="8" height="4" fill="#d8d8d8"/><path d="M654.4 455.5 V452.8 A2.75 2.75 0 0 1 659.9 452.5 V453.4" fill="none" stroke="#d8d8d8" stroke-width="1.2"/><path d="M870.5 449.0 H879.5 V457.0 H874.5 M870.5 449.0 V453.0" fill="none" stroke="#d8d8d8" stroke-width="1.2"/><rect x="866.5" y="453.0" width="9" height="9" fill="none" stroke="#d8d8d8" stroke-width="1.2"/><path d="M890 450.0 L900 460.0 M900 450.0 L890 460.0" stroke="#d8d8d8" stroke-width="1.3"/><path d="M852 480 H861 L856.5 484.5 Z" fill="#9a9a9a"/><path d="M881.8 473.8 H894.8 V475.3 L889.6 483 V490.3 L886.3 488.8 V483 L881.8 475.3 Z" fill="none" stroke="#d8d8d8" stroke-width="1.2" stroke-linejoin="miter"/><rect x="881.8" y="473.5" width="13" height="2" fill="#d8d8d8"/><path d="M893.2 489 H902 L897.6 494 Z" fill="#9a9a9a"/><path d="M857 511.8 L861.5 506.6 L866 511.8 Z" fill="#6a6a6a"/><path d="M857 518.7 H866 L861.5 524.1 Z" fill="#a8a8a8"/><rect x="882" y="510" width="12" height="2.2" fill="#d8d8d8"/><rect x="882" y="514" width="12" height="2.2" fill="#d8d8d8"/><rect x="882" y="518.2" width="12" height="2.2" fill="#d8d8d8"/><path d="M893 522 H902 L897.5 527 Z" fill="#9a9a9a"/><path d="M653 549.5 C656 543.5, 664 543.5, 667 549.5" fill="none" stroke="#cfcfcf" stroke-width="1.2"/><path d="M654 552.5 C657 556.5, 663 556.5, 666 552.5" fill="none" stroke="#cfcfcf" stroke-width="1.2"/><circle cx="660" cy="548.5" r="3.6" fill="#cfcfcf"/><path d="M653 583.5 C656 577.5, 664 577.5, 667 583.5" fill="none" stroke="#cfcfcf" stroke-width="1.2"/><path d="M654 586.5 C657 590.5, 663 590.5, 666 586.5" fill="none" stroke="#cfcfcf" stroke-width="1.2"/><circle cx="660" cy="582.5" r="3.6" fill="#cfcfcf"/><circle cx="679.2" cy="549.5" r="2.8" fill="#ff0000"/><circle cx="689" cy="549.5" r="2.9" fill="#00ff00"/><circle cx="698.8" cy="549.5" r="2.9" fill="#0000ff"/><path d="M712.5 535.6 H718.2 V541.5 L715.8 544 H712.2 V540.8" fill="none" stroke="#e0e0e0" stroke-width="1.1"/><path d="M709.3 537.3 L715 542" stroke="#e0e0e0" stroke-width="1.2"/><path d="M712.5 569.6 H718.2 V575.5 L715.8 578 H712.2 V574.8" fill="none" stroke="#e0e0e0" stroke-width="1.1"/><path d="M709.3 571.3 L715 576" stroke="#e0e0e0" stroke-width="1.2"/><rect x="849" y="547.8" width="12" height="8.2" fill="#8aa0b5"/><path d="M857.5 547.8 V545.3 C857.5 542.8,860 542.3,860.5 543.3" fill="none" stroke="#8aa0b5" stroke-width="1.4"/><rect x="849" y="581.7" width="12" height="8.2" fill="#d8d8d8"/><path d="M851.3 582.2 V580.2 A3.7 3.7 0 0 1 858.7 580.2 V582.2" fill="none" stroke="#d8d8d8" stroke-width="1.6"/><rect x="885" y="542" width="5" height="5" fill="#6a849c"/><rect x="885" y="547" width="5" height="5" fill="#8ea6bb"/><rect x="885" y="552" width="5" height="5" fill="#6a849c"/><rect x="890" y="542" width="5" height="5" fill="#8ea6bb"/><rect x="890" y="547" width="5" height="5" fill="#6a849c"/><rect x="890" y="552" width="5" height="5" fill="#8ea6bb"/><rect x="895" y="542" width="5" height="5" fill="#6a849c"/><rect x="895" y="547" width="5" height="5" fill="#8ea6bb"/><rect x="895" y="552" width="5" height="5" fill="#6a849c"/><rect x="885" y="576" width="5" height="5" fill="#4a4a4a"/><rect x="885" y="581" width="5" height="5" fill="#777777"/><rect x="885" y="586" width="5" height="5" fill="#4a4a4a"/><rect x="890" y="576" width="5" height="5" fill="#777777"/><rect x="890" y="581" width="5" height="5" fill="#4a4a4a"/><rect x="890" y="586" width="5" height="5" fill="#777777"/><rect x="895" y="576" width="5" height="5" fill="#4a4a4a"/><rect x="895" y="581" width="5" height="5" fill="#777777"/><rect x="895" y="586" width="5" height="5" fill="#4a4a4a"/><path d="M654 686 H672.5 M663.25 677 V695.5" stroke="#d8d8d8" stroke-width="2"/><path d="M680.5 683.5 H690.5 L685.5 688.5 Z" fill="#9a9a9a"/><path d="M700.7 682 V695.3 H714" fill="none" stroke="#d8d8d8" stroke-width="1.6"/><rect x="704.5" y="676.8" width="15" height="15" fill="none" stroke="#d8d8d8" stroke-width="1.8"/><path d="M732 680.5 L742 690.5 L752 680.5" fill="none" stroke="#d8d8d8" stroke-width="2"/><path d="M763.5 691 L773.75 681 L784 691" fill="none" stroke="#d8d8d8" stroke-width="2"/><path d="M796 680 H816 M796 686 H816 M796 692 H816" stroke="#d8d8d8" stroke-width="1.8"/><rect x="807" y="677.5" width="2.5" height="5" fill="#d8d8d8"/><rect x="799.5" y="683.5" width="2.5" height="5" fill="#d8d8d8"/><rect x="806" y="689.5" width="2.5" height="5" fill="#d8d8d8"/><path d="M823.5 683.5 H833.8 L828.65 688.5 Z" fill="#9a9a9a"/><path d="M879 679 H898.5" stroke="#d8d8d8" stroke-width="2"/><path d="M885 679 V676.5 H892.5 V679" fill="none" stroke="#d8d8d8" stroke-width="1.6"/><path d="M881 681.5 H896.5 V694 Q896.5 696 894.5 696 H883 Q881 696 881 694 Z" fill="#d8d8d8"/><circle cx="15.5" cy="719.5" r="4" fill="none" stroke="#d0d0d0" stroke-width="1" stroke-dasharray="1 1.1"/><path d="M509 708 V733 M496.5 720.5 H509" stroke="#4a4a4a" stroke-width="0.8" stroke-dasharray="1 1.5"/><path d="M509 720.5 H520" stroke="#e0e0e0" stroke-width="1.3"/><circle cx="509" cy="720.5" r="1.6" fill="#e0e0e0"/><circle cx="520.5" cy="720.5" r="1.6" fill="#e0e0e0"/><rect x="856.5" y="714" width="19" height="12" fill="none" stroke="#d8d8d8" stroke-width="1.3"/><circle cx="866" cy="719.5" r="1" fill="#d8d8d8"/><path d="M866 726 V729.5 M860.5 730 H871.5" stroke="#d8d8d8" stroke-width="1.3"/><rect x="903" y="728" width="1.5" height="1.5" fill="#777"/><rect x="900" y="731" width="1.5" height="1.5" fill="#777"/><rect x="903" y="731" width="1.5" height="1.5" fill="#777"/><rect x="897" y="734" width="1.5" height="1.5" fill="#777"/><rect x="900" y="734" width="1.5" height="1.5" fill="#777"/><rect x="903" y="734" width="1.5" height="1.5" fill="#777"/><rect x="894" y="737" width="1.5" height="1.5" fill="#777"/><rect x="897" y="737" width="1.5" height="1.5" fill="#777"/><rect x="900" y="737" width="1.5" height="1.5" fill="#777"/><rect x="903" y="737" width="1.5" height="1.5" fill="#777"/></svg></body></html>
